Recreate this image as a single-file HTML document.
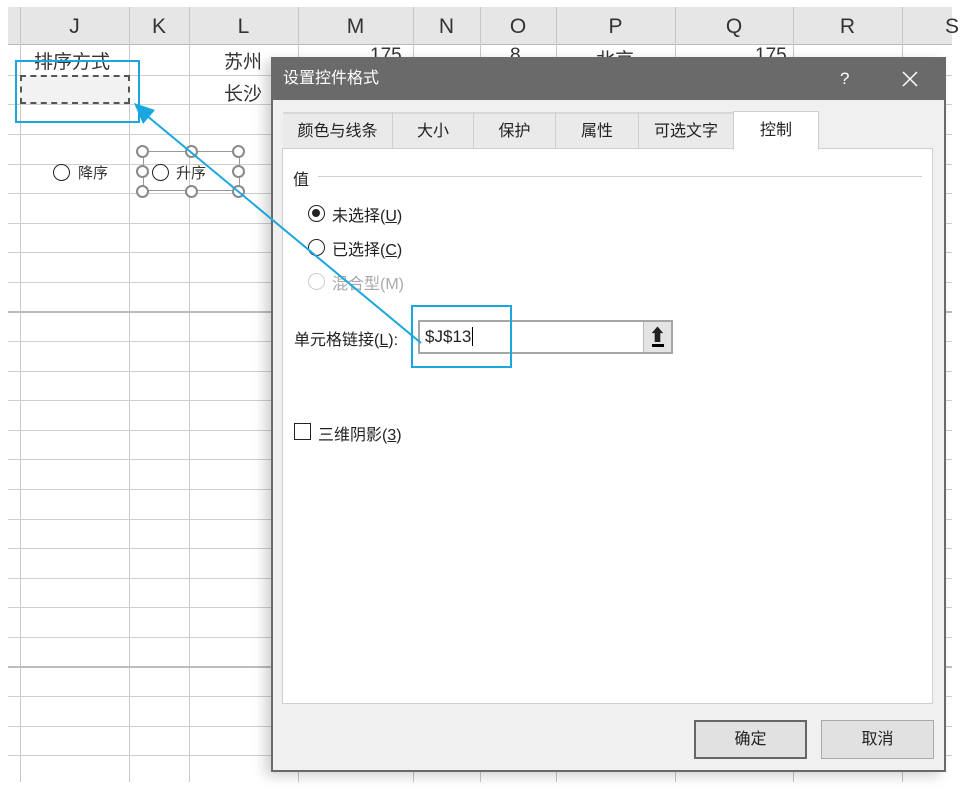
<!DOCTYPE html>
<html><head><meta charset="utf-8"><style>
*{margin:0;padding:0;box-sizing:border-box}
body{width:961px;height:792px;background:#fff;position:relative;overflow:hidden;font-family:"Liberation Sans","Noto Sans CJK SC",sans-serif;color:#222}
.a{position:absolute}
.vl{position:absolute;top:7px;bottom:10px;width:1px;background:#c8c8c8}
.hl{position:absolute;left:8px;width:944px;height:1px;background:#cfcfcf}
.hd{position:absolute;top:7px;height:38px;font-size:21px;color:#333;text-align:center;line-height:40px}
.cell{position:absolute;font-size:19px;color:#333}
.tab{position:absolute;top:113px;height:35px;border-right:1px solid #cfcfcf;font-size:16px;text-align:center;line-height:37px;color:#222}
.hd2{position:absolute;width:13px;height:13px;border:2.5px solid #8a8a8a;border-radius:50%;background:#fff}
</style></head><body>
<div class="a" style="left:8px;top:7px;width:944px;height:38px;background:#e6e6e6;border-bottom:1px solid #bbb"></div>
<div class="vl" style="left:20px"></div><div class="vl" style="left:129px"></div><div class="vl" style="left:189px"></div><div class="vl" style="left:298px"></div><div class="vl" style="left:413px"></div><div class="vl" style="left:480px"></div><div class="vl" style="left:556px"></div><div class="vl" style="left:675px"></div><div class="vl" style="left:793px"></div><div class="vl" style="left:902px"></div>
<div class="hd" style="left:20px;width:109px">J</div>
<div class="hd" style="left:129px;width:60px">K</div>
<div class="hd" style="left:189px;width:109px">L</div>
<div class="hd" style="left:298px;width:115px">M</div>
<div class="hd" style="left:413px;width:67px">N</div>
<div class="hd" style="left:480px;width:76px">O</div>
<div class="hd" style="left:556px;width:119px">P</div>
<div class="hd" style="left:675px;width:118px">Q</div>
<div class="hd" style="left:793px;width:109px">R</div>
<div class="hd" style="left:945px;width:20px;text-align:left">S</div>
<div class="hl" style="top:75px"></div><div class="hl" style="top:104px"></div><div class="hl" style="top:134px"></div><div class="hl" style="top:164px"></div><div class="hl" style="top:193px"></div><div class="hl" style="top:223px"></div><div class="hl" style="top:252px"></div><div class="hl" style="top:282px"></div><div class="hl" style="top:311px;height:2px;background:#bdbdbd"></div><div class="hl" style="top:341px"></div><div class="hl" style="top:371px"></div><div class="hl" style="top:400px"></div><div class="hl" style="top:430px"></div><div class="hl" style="top:459px"></div><div class="hl" style="top:489px"></div><div class="hl" style="top:519px"></div><div class="hl" style="top:548px"></div><div class="hl" style="top:578px"></div><div class="hl" style="top:607px"></div><div class="hl" style="top:637px"></div><div class="hl" style="top:666px;height:2px;background:#bdbdbd"></div><div class="hl" style="top:696px"></div><div class="hl" style="top:726px"></div><div class="hl" style="top:755px"></div>
<div class="cell" style="left:34px;top:47px">排序方式</div>
<div class="cell" style="left:224px;top:47px">苏州</div>
<div class="cell" style="left:224px;top:79px">长沙</div>
<div class="cell" style="left:370px;top:45px">175</div>
<div class="cell" style="left:510px;top:45px">8</div>
<div class="cell" style="left:596px;top:45px">北京</div>
<div class="cell" style="left:755px;top:45px">175</div>
<div class="a" style="left:20px;top:75px;width:110px;height:29px;background:#f2f2f2;border:2px dashed #555"></div>
<div class="a" style="left:53px;top:164px;width:17px;height:17px;border:1px solid #222;border-radius:50%"></div>
<div class="cell" style="left:78px;top:162px;font-size:15px">降序</div>
<div class="a" style="left:143px;top:151px;width:97px;height:40px;border:1px solid #999"></div>
<div class="a" style="left:152px;top:164px;width:17px;height:17px;border:1px solid #222;border-radius:50%"></div>
<div class="cell" style="left:176px;top:162px;font-size:15px">升序</div>
<div class="hd2" style="left:136px;top:145px"></div><div class="hd2" style="left:185px;top:145px"></div><div class="hd2" style="left:232px;top:145px"></div>
<div class="hd2" style="left:136px;top:165px"></div><div class="hd2" style="left:232px;top:165px"></div>
<div class="hd2" style="left:136px;top:185px"></div><div class="hd2" style="left:185px;top:185px"></div><div class="hd2" style="left:232px;top:185px"></div>
<div class="a" style="left:271px;top:57px;width:675px;height:715px;background:#f0f0f0;border:2px solid #6a6a6a;box-shadow:-6px 4px 12px rgba(0,0,0,.18)"></div>
<div class="a" style="left:271px;top:57px;width:675px;height:43px;background:#6a6a6a;color:#fff;font-size:16px;line-height:43px;padding-left:12px">设置控件格式</div>
<div class="a" style="left:840px;top:57px;color:#fff;font-size:17px;line-height:43px">?</div>
<svg class="a" style="left:902px;top:71px" width="16" height="16"><path d="M1 1L15 15M15 1L1 15" stroke="#fff" stroke-width="1.5"/></svg>
<div class="a" style="left:283px;top:112px;width:452px;height:36px;background:#eaeaea;border-top:2px solid #d8d8d8"></div>
<div class="tab" style="left:283px;width:110px">颜色与线条</div>
<div class="tab" style="left:393px;width:81px">大小</div>
<div class="tab" style="left:474px;width:82px">保护</div>
<div class="tab" style="left:556px;width:83px">属性</div>
<div class="tab" style="left:639px;width:95px">可选文字</div>
<div class="a" style="left:282px;top:148px;width:651px;height:556px;background:#fff;border:1px solid #cfcfcf"></div>
<div class="a" style="left:733px;top:111px;width:86px;height:39px;background:#fff;border:1px solid #cfcfcf;border-bottom:none;font-size:16px;text-align:center;line-height:38px">控制</div>
<div class="a" style="left:293px;top:166px;font-size:16px">值</div>
<div class="a" style="left:318px;top:176px;width:604px;height:1px;background:#d0d0d0"></div>
<div class="a" style="left:308px;top:205px;width:17px;height:17px;border:1.5px solid #222;border-radius:50%"><div class="a" style="left:3px;top:3px;width:8px;height:8px;background:#222;border-radius:50%"></div></div>
<div class="a" style="left:332px;top:202px;font-size:16px">未选择(<u>U</u>)</div>
<div class="a" style="left:308px;top:239px;width:17px;height:17px;border:1.5px solid #222;border-radius:50%"></div>
<div class="a" style="left:332px;top:236px;font-size:16px">已选择(<u>C</u>)</div>
<div class="a" style="left:308px;top:273px;width:17px;height:17px;border:1.5px solid #ccc;border-radius:50%"></div>
<div class="a" style="left:332px;top:270px;font-size:16px;color:#aaa">混合型(M)</div>
<div class="a" style="left:294px;top:326px;font-size:16px">单元格链接(<u>L</u>):</div>
<div class="a" style="left:418px;top:320px;width:255px;height:34px;border:2px solid #a6a6a6;background:#fff;font-size:17px;line-height:29px;padding-left:5px">$J$13<span style="border-left:1px solid #000;margin-left:1px"></span></div>
<div class="a" style="left:643px;top:322px;width:28px;height:30px;background:#e4e4e4;border-left:1px solid #bbb;text-align:center;font-size:17px;line-height:28px;font-weight:bold">⬆<div class="a" style="left:8px;top:22px;width:12px;height:3px;background:#000"></div></div>
<div class="a" style="left:294px;top:423px;width:17px;height:17px;border:1.5px solid #222"></div>
<div class="a" style="left:318px;top:421px;font-size:16px">三维阴影(<u>3</u>)</div>
<div class="a" style="left:694px;top:720px;width:113px;height:39px;background:#e1e1e1;border:2px solid #666;font-size:16px;text-align:center;line-height:35px">确定</div>
<div class="a" style="left:821px;top:720px;width:113px;height:39px;background:#e1e1e1;border:1px solid #aaa;font-size:16px;text-align:center;line-height:37px">取消</div>
<svg class="a" style="left:0;top:0" width="961" height="792">
<rect x="16" y="61" width="123" height="61" fill="none" stroke="#1aa7e0" stroke-width="2"/>
<rect x="412" y="306" width="99" height="61" fill="none" stroke="#1aa7e0" stroke-width="2"/>
<line x1="421" y1="343" x2="146" y2="115" stroke="#1aa7e0" stroke-width="2"/>
<polygon points="134,103 155,110 143,124" fill="#1aa7e0"/>
</svg>
</body></html>
